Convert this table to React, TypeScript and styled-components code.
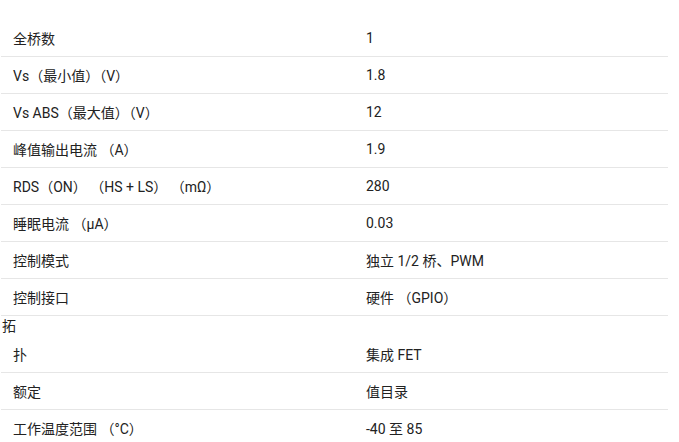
import React from "react";
import styled, { createGlobalStyle } from "styled-components";

const Global = createGlobalStyle`
  html, body { margin: 0; padding: 0; background: #fff; }
  body {
    font-family: Roboto, "Noto Sans CJK SC", "Noto Sans", sans-serif;
    font-size: 14px;
    color: #222;
  }
`;

const Table = styled.div`
  width: 667px;
  margin-left: 1px;
  padding-top: 20px;
`;

const Row = styled.div`
  display: grid;
  grid-template-columns: 353px 1fr;
  border-bottom: 1px solid #e6e6e6;
`;

const Stray = styled.div`
  grid-column: 1 / -1;
  height: 20px;
  line-height: 20px;
  padding-left: 1px;
`;

const Cell = styled.div`
  height: 36px;
  display: flex;
  align-items: center;
  padding: 0 12px;
  white-space: nowrap;
`;

type Item = { label: string; value: string; stray?: string };

const rows: Item[] = [
  { label: "全桥数", value: "1" },
  { label: "Vs（最小值）（V）", value: "1.8" },
  { label: "Vs ABS（最大值）（V）", value: "12" },
  { label: "峰值输出电流 （A）", value: "1.9" },
  { label: "RDS（ON） （HS + LS） （mΩ）", value: "280" },
  { label: "睡眠电流 （μA）", value: "0.03" },
  { label: "控制模式", value: "独立 1/2 桥、PWM" },
  { label: "控制接口", value: "硬件 （GPIO）" },
  { stray: "拓", label: "扑", value: "集成 FET" },
  { label: "额定", value: "值目录" },
  { label: "工作温度范围 （°C）", value: "-40 至 85" },
];

export default function App() {
  return (
    <>
      <Global />
      <Table>
        {rows.map((r, i) => (
          <Row key={i}>
            {r.stray && <Stray>{r.stray}</Stray>}
            <Cell>{r.label}</Cell>
            <Cell>{r.value}</Cell>
          </Row>
        ))}
      </Table>
    </>
  );
}
